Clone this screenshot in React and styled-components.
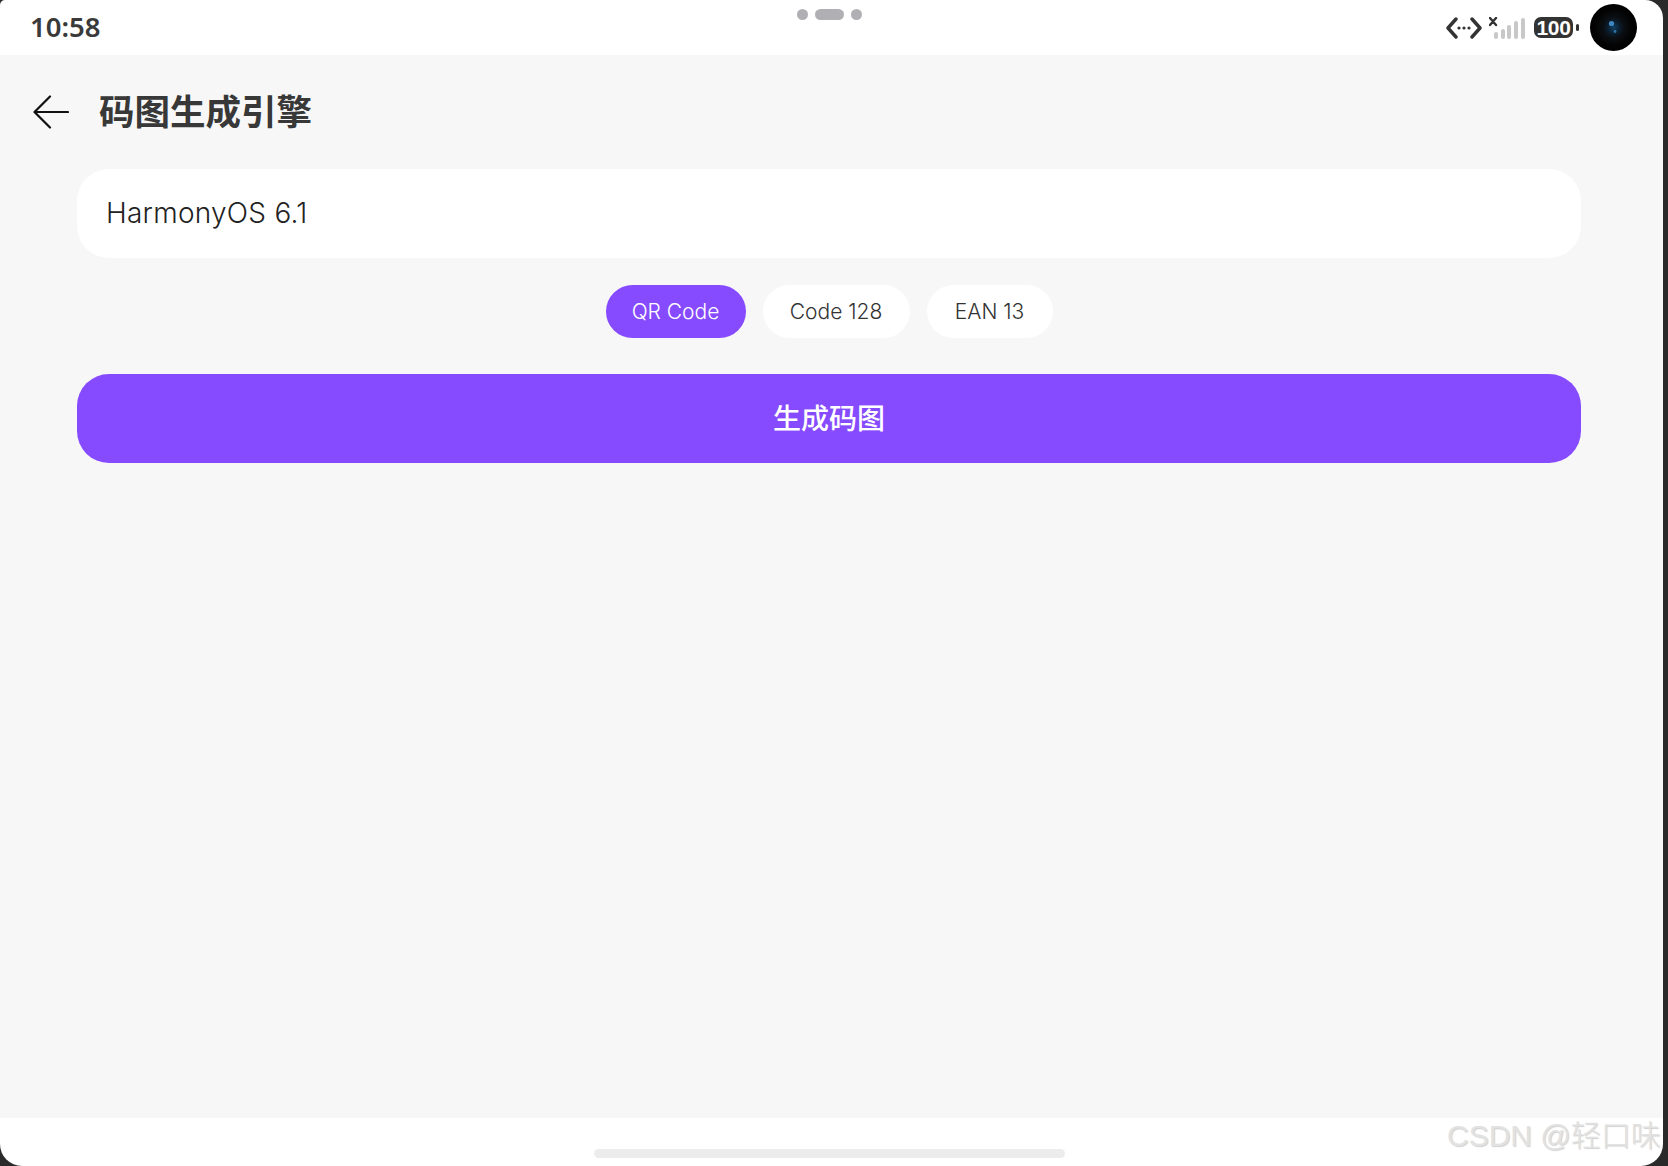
import React from "react";
import styled, { createGlobalStyle } from "styled-components";

const Global = createGlobalStyle`
  html, body { margin: 0; padding: 0; height: 100%; background: #2a2a2a; overflow: hidden; }
  body { font-family: "Inter", "Noto Sans CJK SC", sans-serif; }
  #root { height: 100%; }
`;

const Screen = styled.div`
  position: relative;
  width: 1663px;
  height: 1166px;
  background: #fff;
  border-radius: 5px 18px 22px 22px;
  overflow: hidden;
  display: flex;
  flex-direction: column;
`;

const StatusBar = styled.header`
  height: 55px;
  flex: none;
  display: grid;
  grid-template-columns: 1fr auto 1fr;
  align-items: center;
  padding: 0 26px 0 22px;
`;

const Time = styled.span`
  margin-left: 8px;
  padding-bottom: 2px;
  font-family: "Noto Sans", sans-serif;
  font-size: 27.5px;
  font-weight: 600;
  color: #3a3a3a;
  line-height: 1;
`;

const DragHandle = styled.div`
  align-self: start;
  margin-top: 9px;
  display: flex;
  gap: 7px;
`;

const HandlePart = styled.span`
  display: block;
  width: ${(p) => (p.$wide ? 29 : 11)}px;
  height: 11px;
  border-radius: 6px;
  background: #b0b0b4;
`;

const StatusIcons = styled.div`
  justify-self: end;
  display: flex;
  align-items: center;
  gap: 7px;
`;

const Battery = styled.div`
  position: relative;
  width: 39px;
  height: 21px;
  margin: 0 6px 0 2px;
  border-radius: 7px;
  background: #333;
  color: #fff;
  font-family: "Liberation Sans", sans-serif;
  font-size: 21px;
  font-weight: 700;
  letter-spacing: -0.4px;
  line-height: 21px;
  text-align: center;
  &::after {
    content: "";
    position: absolute;
    right: -6px;
    top: 7px;
    width: 3px;
    height: 7px;
    border-radius: 2px;
    background: #333;
  }
`;

const Camera = styled.svg`
  display: block;
  margin-left: 4px;
`;

const Content = styled.main`
  flex: 1;
  min-height: 0;
  background: #f7f7f7;
  padding: 0 82px 0 77px;
  display: flex;
  flex-direction: column;
`;

const TitleBar = styled.div`
  height: 114px;
  margin-left: -44px;
  display: flex;
  align-items: center;
  gap: 30px;
  flex: none;
`;

const Title = styled.h1`
  margin: 0 0 5px;
  font-family: "Noto Sans CJK SC", sans-serif;
  font-size: 35.5px;
  font-weight: 700;
  color: #383838;
  line-height: 1;
`;

const Field = styled.div`
  height: 89px;
  flex: none;
  box-sizing: border-box;
  border-radius: 32px;
  background: #fff;
  padding: 0 0 2px 29px;
  display: flex;
  align-items: center;
  font-family: "Inter", sans-serif;
  font-size: 28px;
  font-weight: 350;
  letter-spacing: 0.25px;
  color: #222;
`;

const Chips = styled.div`
  margin-top: 27px;
  display: flex;
  justify-content: center;
  gap: 17px;
`;

const Chip = styled.div`
  width: ${(p) => p.$width}px;
  height: 53px;
  border-radius: 26.5px;
  display: flex;
  align-items: center;
  justify-content: center;
  font-family: "Inter", sans-serif;
  font-size: 21px;
  font-weight: 350;
  background: ${(p) => (p.$active ? "#864bff" : "#fff")};
  color: ${(p) => (p.$active ? "#fff" : "#333")};
`;

const Generate = styled.div`
  margin-top: 36px;
  height: 89px;
  flex: none;
  box-sizing: border-box;
  padding-bottom: 3px;
  border-radius: 32px;
  background: #864bff;
  color: #fff;
  display: flex;
  align-items: center;
  justify-content: center;
  font-family: "Noto Sans CJK SC", sans-serif;
  font-size: 28px;
  font-weight: 500;
`;

const NavBar = styled.footer`
  height: 48px;
  flex: none;
  display: flex;
  justify-content: center;
  padding: 31px 5px 0 0;
  box-sizing: border-box;
`;

const HomeIndicator = styled.div`
  width: 471px;
  height: 9px;
  border-radius: 5px;
  background: #ececec;
`;

const Watermark = styled.div`
  position: absolute;
  left: 1447px;
  top: 1116px;
  white-space: nowrap;
  font-family: "Liberation Sans", "Noto Sans CJK SC", sans-serif;
  font-size: 30px;
  font-weight: 300;
  line-height: 40px;
  color: #e2e2e2;
  text-shadow: 1px 1px 1px #d0d0d0;
`;

export default function App() {
  return (
    <>
      <Global />
      <Screen>
        <StatusBar>
          <Time>10:58</Time>
          <DragHandle>
            <HandlePart />
            <HandlePart $wide />
            <HandlePart />
          </DragHandle>
          <StatusIcons>
            <svg width="36" height="22" viewBox="0 0 36 22" fill="none">
              <path d="M10 2 L2 11 L10 20 M26 2 L34 11 L26 20" stroke="#333" strokeWidth="3.4" strokeLinecap="round" strokeLinejoin="round" />
              <circle cx="13" cy="11" r="1.6" fill="#333" />
              <circle cx="18" cy="11" r="1.6" fill="#333" />
              <circle cx="23" cy="11" r="1.6" fill="#333" />
            </svg>
            <svg width="36" height="22" viewBox="0 0 36 22" fill="none">
              <path d="M1 1 L7 8 M7 1 L1 8" stroke="#333" strokeWidth="2.4" strokeLinecap="round" />
              <rect x="5" y="15" width="4" height="7" rx="2" fill="#c8c8c8" />
              <rect x="12" y="12" width="4" height="10" rx="2" fill="#c8c8c8" />
              <rect x="18" y="8" width="4" height="14" rx="2" fill="#c8c8c8" />
              <rect x="25" y="4" width="4" height="18" rx="2" fill="#c8c8c8" />
              <rect x="32" y="1" width="4" height="21" rx="2" fill="#c8c8c8" />
            </svg>
            <Battery>100</Battery>
            <Camera width="47" height="47" viewBox="0 0 47 47">
              <defs>
                <radialGradient id="lens" cx="50%" cy="50%" r="50%">
                  <stop offset="0%" stopColor="#123f63" />
                  <stop offset="28%" stopColor="#0a1c2b" />
                  <stop offset="45%" stopColor="#0b0e12" />
                  <stop offset="75%" stopColor="#040404" />
                  <stop offset="100%" stopColor="#000" />
                </radialGradient>
              </defs>
              <circle cx="23.5" cy="23.5" r="23.5" fill="url(#lens)" />
              <circle cx="21.5" cy="19.5" r="2.6" fill="#3f87c2" />
              <circle cx="25" cy="27.5" r="1.4" fill="#2f74a8" />
            </Camera>
          </StatusIcons>
        </StatusBar>
        <Content>
          <TitleBar>
            <svg width="36" height="34" viewBox="0 0 36 34" fill="none">
              <path d="M35 17 H2 M17 1.5 L1.5 17 L17 32.5" stroke="#111" strokeWidth="2.2" strokeLinecap="round" strokeLinejoin="round" />
            </svg>
            <Title>码图生成引擎</Title>
          </TitleBar>
          <Field>HarmonyOS 6.1</Field>
          <Chips>
            <Chip $active $width={140}>QR Code</Chip>
            <Chip $width={147}>Code 128</Chip>
            <Chip $width={126}>EAN 13</Chip>
          </Chips>
          <Generate>生成码图</Generate>
        </Content>
        <NavBar>
          <HomeIndicator />
        </NavBar>
        <Watermark>CSDN @轻口味</Watermark>
      </Screen>
    </>
  );
}
